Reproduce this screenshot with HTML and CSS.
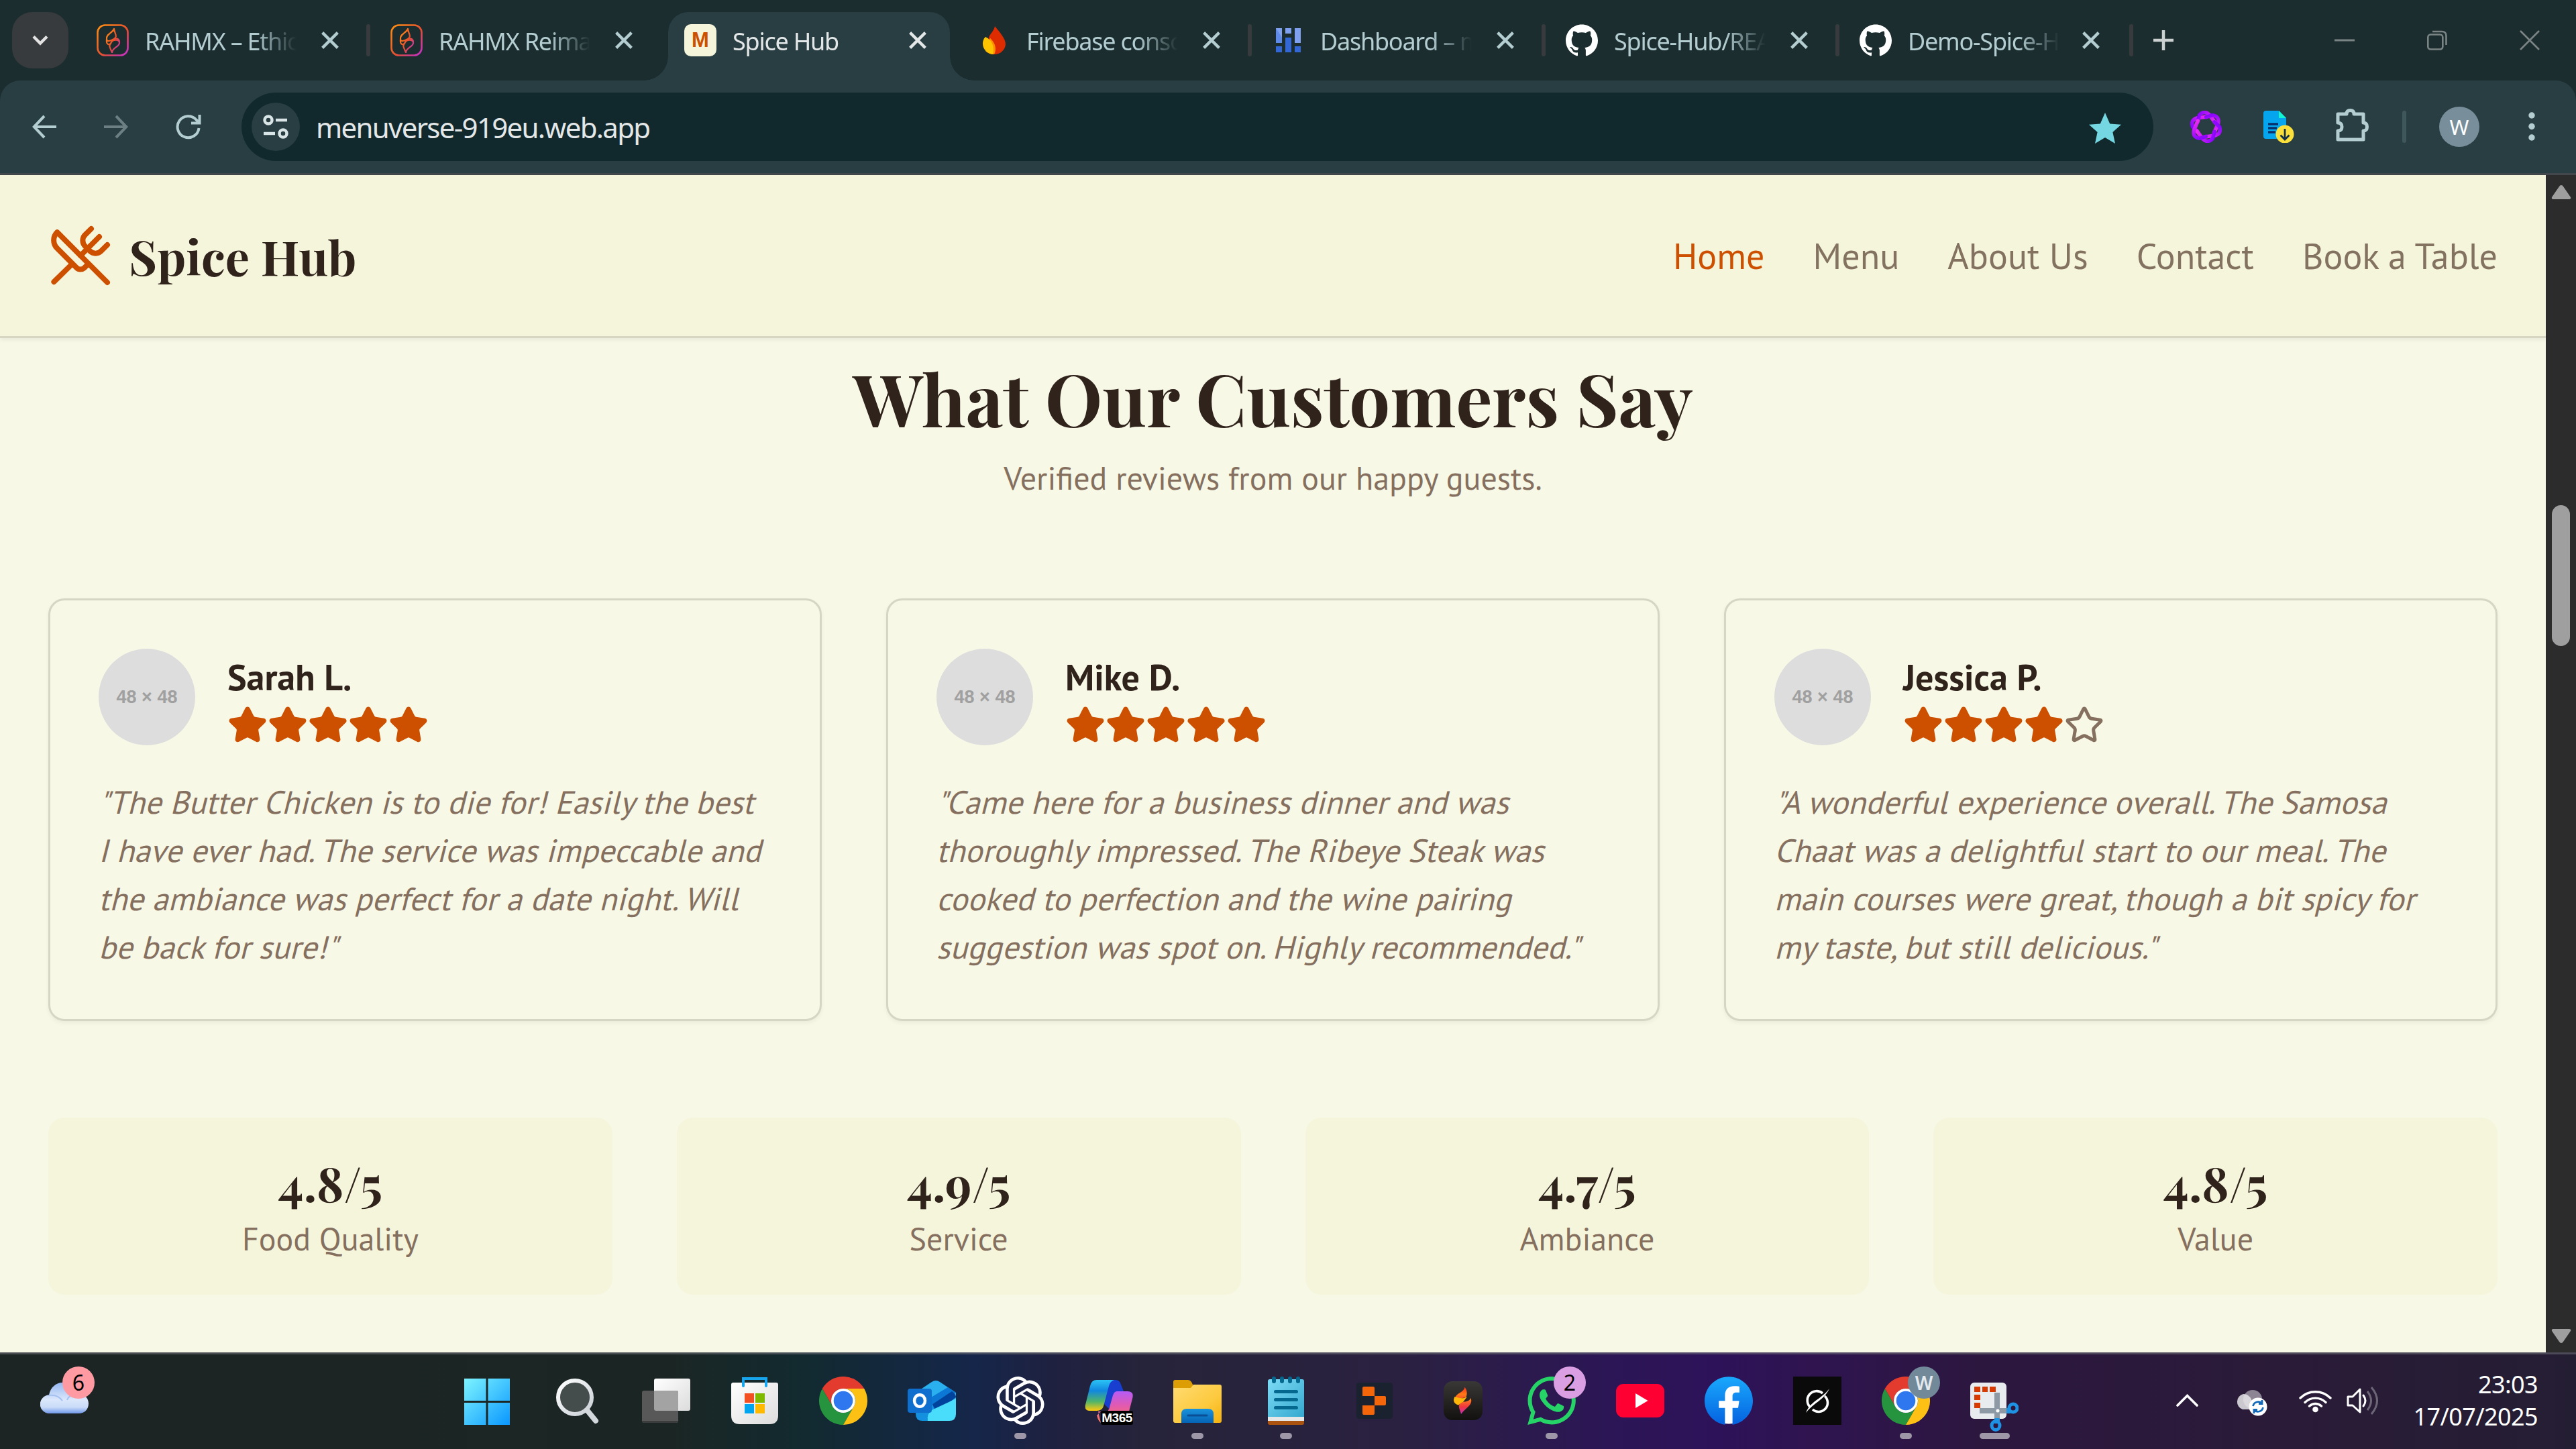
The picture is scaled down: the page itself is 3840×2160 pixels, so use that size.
FILE: index.html
```html
<!DOCTYPE html>
<html lang="en">
<head>
<meta charset="utf-8">
<title>Spice Hub</title>
<link rel="stylesheet" href="styles.css">
</head>
<body>
<svg class="defs" width="0" height="0" aria-hidden="true">
  <defs>
    <linearGradient id="rx" x1="0" y1="0" x2="1" y2="1"><stop offset="0" stop-color="#ff9112"/><stop offset=".55" stop-color="#e8502f"/><stop offset="1" stop-color="#c22fd0"/></linearGradient>
    <linearGradient id="win" x1="0" y1="0" x2="1" y2="1"><stop offset="0" stop-color="#7df4ff"/><stop offset="1" stop-color="#0a97ff"/></linearGradient>
    <linearGradient id="glass" x1="0" y1="0" x2="1" y2="1"><stop offset="0" stop-color="#ffffff"/><stop offset="1" stop-color="#c9cfd6"/></linearGradient>
    <linearGradient id="white" x1="0" y1="0" x2="1" y2="1"><stop offset="0" stop-color="#fff"/><stop offset="1" stop-color="#dcdcdc"/></linearGradient>
    <linearGradient id="fold" x1="0" y1="0" x2="1" y2="1"><stop offset="0" stop-color="#ffdb71"/><stop offset=".6" stop-color="#fdca3f"/><stop offset="1" stop-color="#f5b20e"/></linearGradient>
    <linearGradient id="foldb" x1="0" y1="0" x2="0" y2="1"><stop offset="0" stop-color="#1a93dc"/><stop offset="1" stop-color="#0563b5"/></linearGradient>
    <linearGradient id="note" x1="0" y1="0" x2="1" y2="1"><stop offset="0" stop-color="#7ddbf5"/><stop offset="1" stop-color="#35a8cf"/></linearGradient>
    <linearGradient id="fb" x1="0" y1="0" x2="0" y2="1"><stop offset="0" stop-color="#19a9fd"/><stop offset="1" stop-color="#0562e0"/></linearGradient>
    <linearGradient id="purple" x1="0" y1="1" x2="1" y2="0"><stop offset="0" stop-color="#7a00ff"/><stop offset="1" stop-color="#ec2bf2"/></linearGradient>
    <linearGradient id="cop1" x1="0" y1="0" x2="0" y2="1"><stop offset="0" stop-color="#2bc4f5"/><stop offset=".35" stop-color="#1187df"/><stop offset=".7" stop-color="#4fb56a"/><stop offset="1" stop-color="#ffc90f"/></linearGradient>
    <linearGradient id="cop2" x1="0" y1="0" x2="0" y2="1"><stop offset="0" stop-color="#b65cf7"/><stop offset=".45" stop-color="#e15ab0"/><stop offset="1" stop-color="#ff7a55"/></linearGradient>
    <linearGradient id="cloud" x1="0" y1="0" x2="0" y2="1"><stop offset="0" stop-color="#94b8f2"/><stop offset=".55" stop-color="#dbe7fb"/><stop offset=".8" stop-color="#c9dbf8"/><stop offset="1" stop-color="#6f98ea"/></linearGradient>
    <linearGradient id="flame" x1="0" y1="0" x2="0" y2="1"><stop offset="0" stop-color="#ff2d1a"/><stop offset=".6" stop-color="#ff7a18"/><stop offset="1" stop-color="#ff4a28"/></linearGradient>
    <linearGradient id="flame2" x1="0" y1="0" x2="0" y2="1"><stop offset="0" stop-color="#ff8a18"/><stop offset=".55" stop-color="#f0353f"/><stop offset="1" stop-color="#c42fc0"/></linearGradient>
    <linearGradient id="dark" x1="0" y1="0" x2="0" y2="1"><stop offset="0" stop-color="#3a3836"/><stop offset="1" stop-color="#121110"/></linearGradient>
    <symbol id="x" viewBox="0 0 24 24"><path d="M1.5 1.5 22.500 22.500M22.500 1.500 1.500 22.500" fill="none" stroke="currentColor" stroke-width="4"/></symbol>
    <symbol id="rahmx" viewBox="0 0 48 48"><rect x="1.500" y="1.500" width="45" height="45" rx="11" fill="none" stroke="url(#rx)" stroke-width="2.600"/><path d="M26 7C27 15 32 18 26 22C21 25 15 27 15 22C14 15 23 14 26 7ZM15 23C14 30 19 33 22 27C24 23 33 22 34 27C35 34 24 34 23 42C20 35 17 32 22 28M26 22C31 20 34 23 34 27" fill="none" stroke="url(#rx)" stroke-width="2.200" stroke-linejoin="round"/></symbol>
    <symbol id="github" viewBox="0 0 24 24"><path fill="#fff" d="M12 .297c-6.630 0-12 5.373-12 12 0 5.303 3.438 9.800 8.205 11.385.6.113.82-.258.82-.577 0-.285-.01-1.040-.015-2.040-3.338.724-4.042-1.610-4.042-1.610C4.422 18.070 3.633 17.700 3.633 17.700c-1.087-.744.084-.729.084-.729 1.205.084 1.838 1.236 1.838 1.236 1.070 1.835 2.809 1.305 3.495.998.108-.776.417-1.305.76-1.605-2.665-.3-5.466-1.332-5.466-5.930 0-1.310.465-2.380 1.235-3.220-.135-.303-.54-1.523.105-3.176 0 0 1.005-.322 3.300 1.230.96-.267 1.980-.399 3-.405 1.020.006 2.040.138 3 .405 2.280-1.552 3.285-1.230 3.285-1.230.645 1.653.24 2.873.12 3.176.765.84 1.230 1.910 1.230 3.220 0 4.610-2.805 5.625-5.475 5.920.42.36.81 1.096.81 2.220 0 1.606-.015 2.896-.015 3.286 0 .315.21.69.825.57C20.565 22.092 24 17.592 24 12.297c0-6.627-5.373-12-12-12"/></symbol>
    <symbol id="knot" viewBox="0 0 24 24"><path fill="currentColor" d="M22.2819 9.8211a5.9847 5.9847 0 0 0-.5157-4.9108 6.0462 6.0462 0 0 0-6.5098-2.9A6.0651 6.0651 0 0 0 4.9807 4.1818a5.9847 5.9847 0 0 0-3.9977 2.9 6.0462 6.0462 0 0 0 .7427 7.0966 5.98 5.98 0 0 0 .511 4.9107 6.051 6.051 0 0 0 6.5146 2.9001A5.9847 5.9847 0 0 0 13.2599 24a6.0557 6.0557 0 0 0 5.7718-4.2058 5.9894 5.9894 0 0 0 3.9977-2.9001 6.0557 6.0557 0 0 0-.7475-7.0729zm-9.022 12.6081a4.4755 4.4755 0 0 1-2.8764-1.0408l.1419-.0804 4.7783-2.7582a.7948.7948 0 0 0 .3927-.6813v-6.7369l2.02 1.1686a.071.071 0 0 1 .038.052v5.5826a4.504 4.504 0 0 1-4.4945 4.4944zm-9.6607-4.1254a4.4708 4.4708 0 0 1-.5346-3.0137l.142.0852 4.783 2.7582a.7712.7712 0 0 0 .7806 0l5.8428-3.3685v2.3324a.0804.0804 0 0 1-.0332.0615L9.74 19.9502a4.4992 4.4992 0 0 1-6.1408-1.6464zM2.3408 7.8956a4.485 4.485 0 0 1 2.3655-1.9728V11.6a.7664.7664 0 0 0 .3879.6765l5.8144 3.3543-2.0201 1.1685a.0757.0757 0 0 1-.071 0l-4.8303-2.7865A4.504 4.504 0 0 1 2.3408 7.872zm16.5963 3.8558L13.1038 8.364 15.1192 7.2a.0757.0757 0 0 1 .071 0l4.8303 2.7913a4.4944 4.4944 0 0 1-.6765 8.1042v-5.6772a.79.79 0 0 0-.407-.667zm2.0107-3.0231l-.142-.0852-4.7735-2.7818a.7759.7759 0 0 0-.7854 0L9.409 9.2297V6.8974a.0662.0662 0 0 1 .0284-.0615l4.8303-2.7866a4.4992 4.4992 0 0 1 6.6802 4.66zM8.3065 12.863l-2.02-1.1638a.0804.0804 0 0 1-.038-.0567V6.0742a4.4992 4.4992 0 0 1 7.3757-3.4537l-.142.0805L8.704 5.459a.7948.7948 0 0 0-.3927.6813zm1.0976-2.3654l2.602-1.4998 2.6069 1.4998v2.9994l-2.5974 1.4997-2.6067-1.4997Z"/></symbol>
    <symbol id="chrome" viewBox="0 0 72 72"><path fill="#e33b2e" d="M36 18H67.200A36 36 0 0 0 4.800 18L20.400 45A18 18 0 0 1 36 18Z"/><path fill="#26943f" d="M20.400 45 4.800 18A36 36 0 0 0 36 72L51.600 45A18 18 0 0 1 20.400 45Z"/><path fill="#fdc015" d="M51.600 45 36 72A36 36 0 0 0 67.200 18H36A18 18 0 0 1 51.600 45Z"/><circle cx="36" cy="36" r="18" fill="#fff"/><circle cx="36" cy="36" r="14.300" fill="#2f77ee"/></symbol>
    <symbol id="star" viewBox="0 0 24 24"><path stroke="currentColor" stroke-width="2" stroke-linecap="round" stroke-linejoin="round" d="M11.525 2.295a.53.53 0 0 1 .95 0l2.31 4.679a2.123 2.123 0 0 0 1.595 1.16l5.166.756a.53.53 0 0 1 .294.904l-3.736 3.638a2.123 2.123 0 0 0-.611 1.878l.882 5.14a.53.53 0 0 1-.771.56l-4.618-2.428a2.122 2.122 0 0 0-1.973 0L6.396 21.01a.53.53 0 0 1-.77-.56l.881-5.139a2.122 2.122 0 0 0-.611-1.879L2.16 9.795a.53.53 0 0 1 .294-.906l5.165-.755a2.122 2.122 0 0 0 1.597-1.16z"/></symbol>
  </defs>
</svg>

<div class="browser">
  <div class="tabstrip">
    <div class="tab-search"><svg width="28" height="18" viewBox="0 0 28 18"><path d="M4 3.500 14 13.500 24 3.500" fill="none" stroke="#e3e3e3" stroke-width="4.500"/></svg></div>
    <div class="tab sep"><svg class="fav"><use href="#rahmx"/></svg><span class="title">RAHMX – Ethical</span><svg class="close"><use href="#x"/></svg></div>
    <div class="tab"><svg class="fav"><use href="#rahmx"/></svg><span class="title">RAHMX Reimagined</span><svg class="close"><use href="#x"/></svg></div>
    <div class="tab active"><span class="fav letter">M</span><span class="title">Spice Hub</span><svg class="close"><use href="#x"/></svg></div>
    <div class="tab sep"><svg class="fav" viewBox="0 0 48 48"><path fill="#dd2c00" d="M25 3C33 13 41 22 41 30A17 16 0 0 1 24 45A17 16 0 0 1 14 36C14 28 14 28 16 20C18 14 24 10 25 3Z"/><path fill="#ff9100" d="M18 21C26 28 28 38 24 45A17 16 0 0 1 11 40Z"/><path fill="#ffc400" d="M11 19C20 23 25 33 22 44.800C13 44 7 37 7 29C7 25 8 22 11 19Z"/></svg><span class="title">Firebase console</span><svg class="close"><use href="#x"/></svg></div>
    <div class="tab sep"><svg class="fav" viewBox="0 0 48 48"><g fill="#7fa0ee"><path d="M6 6h9v22H6zM20 6h9v8h-9zM34 6h9v22h-9z"/></g><g fill="#3367d6"><path d="M6 33h9v9H6zM20 20h9v22h-9zM34 33h9v9h-9z"/></g><path fill="#5e8bea" d="M6 6v22h9V20z"/></svg><span class="title">Dashboard – menuverse</span><svg class="close"><use href="#x"/></svg></div>
    <div class="tab sep"><svg class="fav"><use href="#github"/></svg><span class="title">Spice-Hub/README</span><svg class="close"><use href="#x"/></svg></div>
    <div class="tab sep"><svg class="fav"><use href="#github"/></svg><span class="title">Demo-Spice-Hub</span><svg class="close last"><use href="#x"/></svg></div>
    <svg class="plus" width="30" height="30"><path d="M15 0V30M0 15H30" stroke="#ccd2d2" stroke-width="4.500"/></svg>
    <div class="wincontrols">
      <svg width="30" height="30"><path d="M0 15H30" stroke="#7b8485" stroke-width="3"/></svg>
      <svg width="30" height="30" fill="none" stroke="#7b8485" stroke-width="2.600"><rect x="1.300" y="6.500" width="22" height="22" rx="4"/><path d="M8 2H22Q28.500 2 28.500 8.500V22"/></svg>
      <svg width="30" height="30"><path d="M1 1 29 29M29 1 1 29" stroke="#7b8485" stroke-width="2.600"/></svg>
    </div>
  </div>
  <div class="toolbar">
    <div class="navbtns">
      <svg width="36" height="36" fill="none" stroke="#b3cdd1" stroke-width="4"><path d="M18 2 2.800 18 18 34M3 18H36"/></svg>
      <svg width="36" height="36" fill="none" stroke="#6c7f83" stroke-width="4"><path d="M18 2 33.200 18 18 34M33 18H0"/></svg>
      <svg width="38" height="38" fill="none" stroke="#b3cdd1" stroke-width="4"><path d="M34.500 21A16 16 0 1 1 30.500 8.500L34 12M35.500 1V13.500H23"/></svg>
    </div>
    <div class="omnibox">
      <div class="site"><svg width="38" height="36" fill="none" stroke="#d8e4e5" stroke-width="4.500"><circle cx="8" cy="8" r="5.500"/><path d="M19 8H36M1 28H18"/><circle cx="30" cy="28" r="5.500"/></svg></div>
      <span class="url">menuverse-919eu.web.app</span>
      <svg class="bookmark" width="48" height="46" viewBox="0 0 48 46"><path fill="#75d7e2" d="M24 0 31.200 16.500 48 17.800 35.400 29 39 46 24 37 9 46 12.600 29 0 17.800 16.800 16.500Z"/></svg>
    </div>
    <div class="exts">
      <svg class="e1" width="49" height="48" viewBox="0 0 49 48" fill="none" stroke="url(#purple)" stroke-width="5.600" stroke-linecap="round" stroke-linejoin="round"><path id="petal" d="M12 31 4.500 24Q1 14 11 11L26 9"/><use href="#petal" transform="rotate(60 24.500 24)"/><use href="#petal" transform="rotate(120 24.500 24)"/><use href="#petal" transform="rotate(180 24.500 24)"/><use href="#petal" transform="rotate(240 24.500 24)"/><use href="#petal" transform="rotate(300 24.500 24)"/></svg>
      <svg class="e2" width="46" height="48"><path fill="#06a5ef" d="M4 0H23L34 11V38Q34 42 30 42H4Q0 42 0 38V4Q0 0 4 0Z"/><path fill="#12f5d0" d="M23 0 34 11H23Z"/><path d="M7 20H22M7 26H20M7 32H18" stroke="#07306b" stroke-width="3.500"/><circle cx="32" cy="35" r="13.500" fill="#fbdf3a"/><path d="M32 27V42M25.500 36.500 32 43 38.500 36.500" fill="none" stroke="#15324c" stroke-width="2.800"/></svg>
      <svg class="e3" width="50" height="50" fill="none" stroke="#b3cdd1" stroke-width="5" stroke-linejoin="round"><path d="M3 8H16Q16 2.500 21.500 2.500T27 8H41V21Q46.500 21 46.500 27T41 33V46H3V33Q9 33 9 27T3 21Z"/></svg>
      <span class="vbar"></span>
      <span class="profile">W</span>
      <svg class="dots" width="10" height="44" fill="#b3cdd1"><circle cx="5" cy="5" r="4.700"/><circle cx="5" cy="21.500" r="4.700"/><circle cx="5" cy="38" r="4.700"/></svg>
    </div>
  </div>
</div>

<div class="viewport">
  <div class="page">
    <header class="header">
      <div class="logo">
        <svg width="96" height="96" viewBox="0 0 24 24" fill="none" stroke="#cc5000" stroke-width="2" stroke-linecap="round" stroke-linejoin="round"><path d="m16 2-2.300 2.300a3 3 0 0 0 0 4.200l1.800 1.800a3 3 0 0 0 4.200 0L22 8"/><path d="M15 15 3.300 3.300a4.200 4.200 0 0 0 0 6l7.300 7.300c.7.7 2 .7 2.800 0L15 15Zm0 0 7 7"/><path d="m2.100 21.800 6.400-6.300"/><path d="m19 5-7 7"/></svg>
        <span>Spice Hub</span>
      </div>
      <nav class="nav"><a class="current">Home</a><a>Menu</a><a>About Us</a><a>Contact</a><a>Book a Table</a></nav>
    </header>
    <main class="main">
      <h2>What Our Customers Say</h2>
      <p class="sub">Verified reviews from our happy guests.</p>
      <div class="reviews">
        <article class="card">
          <div class="who"><div class="avatar">48 × 48</div><div><h3>Sarah L.</h3><div class="stars"><svg><use href="#star"/></svg><svg><use href="#star"/></svg><svg><use href="#star"/></svg><svg><use href="#star"/></svg><svg><use href="#star"/></svg></div></div></div>
          <p><span>"The Butter Chicken is to die for! Easily the best</span><span>I have ever had. The service was impeccable and</span><span>the ambiance was perfect for a date night. Will</span><span>be back for sure!"</span></p>
        </article>
        <article class="card">
          <div class="who"><div class="avatar">48 × 48</div><div><h3>Mike D.</h3><div class="stars"><svg><use href="#star"/></svg><svg><use href="#star"/></svg><svg><use href="#star"/></svg><svg><use href="#star"/></svg><svg><use href="#star"/></svg></div></div></div>
          <p><span>"Came here for a business dinner and was</span><span>thoroughly impressed. The Ribeye Steak was</span><span>cooked to perfection and the wine pairing</span><span>suggestion was spot on. Highly recommended."</span></p>
        </article>
        <article class="card">
          <div class="who"><div class="avatar">48 × 48</div><div><h3>Jessica P.</h3><div class="stars"><svg><use href="#star"/></svg><svg><use href="#star"/></svg><svg><use href="#star"/></svg><svg><use href="#star"/></svg><svg class="empty"><use href="#star"/></svg></div></div></div>
          <p><span>"A wonderful experience overall. The Samosa</span><span>Chaat was a delightful start to our meal. The</span><span>main courses were great, though a bit spicy for</span><span>my taste, but still delicious."</span></p>
        </article>
      </div>
      <div class="stats">
        <div class="stat"><b>4.8/5</b><span>Food Quality</span></div>
        <div class="stat"><b>4.9/5</b><span>Service</span></div>
        <div class="stat"><b>4.7/5</b><span>Ambiance</span></div>
        <div class="stat"><b>4.8/5</b><span>Value</span></div>
      </div>
    </main>
  </div>
  <div class="scrollbar">
    <svg width="30" height="21"><path d="M15 0 Q17 0 18 2L29 18Q30 21 27 21H3Q0 21 1 18L12 2Q13 0 15 0Z" fill="#9f9f9f"/></svg>
    <span class="thumb"></span>
    <svg class="down" width="30" height="21"><path d="M15 21Q17 21 18 19L29 3Q30 0 27 0H3Q0 0 1 3L12 19Q13 21 15 21Z" fill="#9f9f9f"/></svg>
  </div>
</div>

<div class="taskbar">
  <div class="weather">
    <svg width="72" height="46"><path fill="url(#cloud)" d="M14 46A13.500 13.500 0 0 1 13 18.500C15 7 24 0 33 0C43 0 50 6 53 17C64 15 72 22 72 31C72 40 66 46 57 46Z"/><path d="M12.500 19Q26 17 33 27M40 26Q43 18 53 17" fill="none" stroke="#a4c0f1" stroke-width="2"/></svg>
    <span class="badge pink">6</span>
  </div>
  <div class="apps">
    <div class="app start"><svg viewBox="0 0 72 72"><path fill="url(#win)" d="M2 3H34.500V36H2ZM37.500 3H70V36H37.500ZM2 39H34.500V72H2ZM37.500 39H70V72H37.500Z"/></svg></div>
    <div class="app"><svg viewBox="0 0 72 72"><circle cx="32" cy="31" r="25" fill="#454c4c" stroke="url(#glass)" stroke-width="6"/><path d="M50 50 63 66" stroke="#d3d8dd" stroke-width="8" stroke-linecap="round"/></svg></div>
    <div class="app"><svg viewBox="0 0 72 72"><rect x="18" y="3" width="54" height="48" rx="3" fill="url(#white)"/><rect x="0" y="21" width="54" height="48" rx="3" fill="#585858"/><path d="M18 21H51Q54 21 54 24V51H21Q18 51 18 48Z" fill="#a3a3a3"/><path d="M0 66H54Q54 69 51 69H3Q0 69 0 66Z" fill="#3c3c3c"/></svg></div>
    <div class="app"><svg viewBox="0 0 72 72"><path d="M19 17V3H53V17" fill="none" stroke="#19b0f0" stroke-width="4"/><path fill="url(#white)" d="M4 9H68Q71 9 71 12V58Q71 71 58 71H14Q1 71 1 58V12Q1 9 4 9Z"/><path d="M19 14V3H53V14" fill="none" stroke="#19a4ee" stroke-width="4" stroke-linecap="round"/><path fill="#f25022" d="M21 25H35V39H21Z"/><path fill="#7fba00" d="M37 25H51V39H37Z"/><path fill="#00a4ef" d="M21 41H35V55H21Z"/><path fill="#ffb900" d="M37 41H51V55H37Z"/></svg></div>
    <div class="app"><svg><use href="#chrome"/></svg></div>
    <div class="app"><svg viewBox="0 0 72 72"><path fill="#2ab0ee" d="M12 24 36 8Q42 4 48 8L72 24V40H12Z"/><path fill="#0a78d4" d="M30 34 60 16 72 24 36 48Z"/><path fill="#00439c" d="M36 42 66 22Q72 26 72 31L42 54Z"/><path fill="#1490df" d="M12 40H36L50 66H22Q12 66 12 56Z"/><path fill="#49dcfb" d="M72 33V56Q72 66 62 66H30Q28 56 36 50Z"/><rect y="18" width="36" height="36" rx="4" fill="#0f6fcf"/><ellipse cx="18" cy="36" rx="8" ry="8.800" fill="none" stroke="#fff" stroke-width="4.500"/></svg></div>
    <div class="app run"><svg class="white"><use href="#knot"/></svg></div>
    <div class="app"><svg viewBox="0 0 72 72"><path fill="#183fd0" d="M34 5H46Q52 5 54 12L58 22Q48 20 44 30L36 48 28 40Z"/><path fill="url(#cop1)" d="M18 5H44Q38 7 36 14L28 44Q26 51 18 51H8Q-1 51 1 42L8 14Q10 5 18 5Z"/><path fill="url(#cop2)" d="M48 22H64Q74 22 71 33L66 52H24L18 58Q20 66 24 69L20 52H34Q37 48 38 42L42 28Q44 22 48 22Z"/><rect x="24" y="51" width="48" height="21" rx="3" fill="#000"/></svg><span class="m365">M365</span></div>
    <div class="app run"><svg viewBox="0 0 72 72"><path fill="#dd9d05" d="M3 5H22Q25 5 27 8L30 14V30H0V8Q0 5 3 5Z"/><path fill="url(#fold)" d="M0 17H26L30 12H69Q72 12 72 15V66Q72 69 69 69H3Q0 69 0 66Z"/><path fill="url(#foldb)" d="M12 69V56Q12 48 20 48H52Q60 48 60 56V69Z"/><path d="M22 58H50" stroke="#0a4f95" stroke-width="3" stroke-linecap="round"/></svg></div>
    <div class="app run"><svg viewBox="0 0 72 72"><rect x="9" y="56" width="54" height="16" rx="3" fill="#aa5310"/><path fill="#e7e7e7" d="M9 52H63V66H9Z"/><path fill="url(#note)" d="M12 4H60Q63 4 63 7V60H9V7Q9 4 12 4Z"/><path d="M18 3V7M30 3V7M42 3V7M54 3V7" stroke="#05688f" stroke-width="6" stroke-linecap="round"/><path d="M20.500 22.500H51.500M20.500 34.500H51.500M20.500 46.500H51.500" stroke="#05688f" stroke-width="5" stroke-linecap="round"/></svg></div>
    <div class="app"><svg viewBox="0 0 72 72"><rect x="9" y="9" width="54" height="54" rx="4" fill="#1a222f"/><path fill="#f5660a" d="M20 15H34Q36 15 36 17V29H18V17Q18 15 20 15ZM36 29H51Q53 29 53 31V41Q53 43 51 43H36ZM18 43H36V55Q36 57 34 57H20Q18 57 18 55Z"/></svg></div>
    <div class="app"><svg viewBox="0 0 72 72"><rect x="7" y="7" width="58" height="58" rx="13" fill="url(#dark)"/><path fill="url(#flame)" d="M38.500 15.500C43 22 42 28 40 31L25 34C22 25 37 25 38.500 15.500Z"/><path fill="#ffb60a" d="M23.500 30C20 36 23 41 29 42.500L36 38 42 30C36 34 30 32 23.500 30Z"/><path fill="url(#flame2)" d="M47.500 32C51 43 41 45 33 56C32 50 27 44 32 40C37 36 44 39 47.500 32Z"/></svg></div>
    <div class="app run"><svg viewBox="0 0 24 24"><path fill="#25d366" d="M17.472 14.382c-.297-.149-1.758-.867-2.03-.967-.273-.099-.471-.148-.67.15-.197.297-.767.966-.94 1.164-.173.199-.347.223-.644.075-.297-.15-1.255-.463-2.39-1.475-.883-.788-1.48-1.761-1.653-2.059-.173-.297-.018-.458.13-.606.134-.133.298-.347.446-.52.149-.174.198-.298.298-.497.099-.198.05-.371-.025-.52-.075-.149-.669-1.612-.916-2.207-.242-.579-.487-.5-.669-.51-.173-.008-.371-.01-.57-.01-.198 0-.52.074-.792.372-.272.297-1.04 1.016-1.04 2.479 0 1.462 1.065 2.875 1.213 3.074.149.198 2.096 3.2 5.077 4.487.709.306 1.262.489 1.694.625.712.227 1.36.195 1.871.118.571-.085 1.758-.719 2.006-1.413.248-.694.248-1.289.173-1.413-.074-.124-.272-.198-.57-.347m-5.421 7.403h-.004a9.87 9.87 0 01-5.031-1.378l-.361-.214-3.741.982.998-3.648-.235-.374a9.86 9.86 0 01-1.51-5.26c.001-5.45 4.436-9.884 9.888-9.884 2.64 0 5.122 1.03 6.988 2.898a9.825 9.825 0 012.893 6.994c-.003 5.45-4.437 9.884-9.885 9.884m8.413-18.297A11.815 11.815 0 0012.05 0C5.495 0 .16 5.335.157 11.892c0 2.096.547 4.142 1.588 5.945L.057 24l6.305-1.654a11.882 11.882 0 005.683 1.448h.005c6.554 0 11.89-5.335 11.893-11.893a11.821 11.821 0 00-3.48-8.413z"/></svg><span class="badge lilac">2</span></div>
    <div class="app"><svg viewBox="0 0 72 72"><rect y="11" width="72" height="50" rx="11" fill="#ff0033"/><path fill="#fff" d="M29 25 47.500 36 29 47Z"/></svg></div>
    <div class="app"><svg viewBox="0 0 24 24"><circle cx="12" cy="12.500" r="11" fill="#fff"/><path fill="url(#fb)" d="M24 12.073c0-6.627-5.373-12-12-12s-12 5.373-12 12c0 5.990 4.388 10.954 10.125 11.854v-8.385H7.078v-3.470h3.047V9.430c0-3.007 1.792-4.669 4.533-4.669 1.312 0 2.686.235 2.686.235v2.953H15.830c-1.491 0-1.956.925-1.956 1.874v2.250h3.328l-.532 3.470h-2.796v8.385C19.612 23.027 24 18.062 24 12.073z"/></svg></div>
    <div class="app"><svg viewBox="0 0 72 72"><path fill="#0a0a0a" d="M0 0H72V72H0Z"/><path d="M44 25A13 13 0 0 0 26 46M29 49A13 13 0 0 0 47 29" fill="none" stroke="#fff" stroke-width="3.600"/><path fill="#fff" d="M54 18C46 35 32 38 19 54C26 36 42 34 54 18Z"/></svg></div>
    <div class="app run"><svg><use href="#chrome"/></svg><span class="badge slate">W</span></div>
    <div class="app run wide"><svg class="snip" viewBox="0 0 72 82"><rect y="9" width="54" height="54" rx="6" fill="#e9ecef"/><path fill="#d83b01" d="M6 15H15V23H6ZM18 15H26V23H18ZM29 15H38V23H29ZM6 27H15V35H6ZM6 39H15V47H6Z"/><path d="M40 24V66M14 51H58" stroke="#8d9aa5" stroke-width="8"/><path d="M40 62V70M54 51H60" stroke="#1e93e4" stroke-width="8"/><circle cx="41" cy="51" r="2.500" fill="#fff"/><ellipse cx="38" cy="73" rx="6" ry="6.500" fill="none" stroke="#1e93e4" stroke-width="5"/><ellipse cx="64" cy="47" rx="6" ry="6" fill="none" stroke="#1e93e4" stroke-width="5"/></svg></div>
  </div>
  <div class="tray">
    <svg class="chev" width="33" height="20"><path d="M2 18 16.500 3.500 31 18" fill="none" stroke="#fff" stroke-width="3.600" stroke-linecap="round"/></svg>
    <svg class="sync" width="50" height="42"><circle cx="27" cy="16" r="14" fill="#8d8594"/><path fill="#e8e6ea" d="M13 8A13 13 0 0 1 26 20V31H12A12 12 0 0 1 13 8Z" opacity=".85"/><circle cx="35" cy="27" r="13.500" fill="#fff"/><path d="M27.500 26A8 8 0 0 1 41 22M42.500 28A8 8 0 0 1 29 32M41 17V22.500H36M29 37V31.500H34" fill="none" stroke="#1268b8" stroke-width="2.800"/></svg>
    <svg class="wifi" width="49" height="36" fill="none" stroke="#fff" stroke-width="3.400" stroke-linecap="round"><path d="M2 14A32 32 0 0 1 47 14M9 20.500A22 22 0 0 1 40 20.500M15.500 26A13.500 13.500 0 0 1 33.500 26"/><circle cx="24.500" cy="31" r="2.600" fill="#fff"/></svg>
    <svg class="vol" width="50" height="42" fill="none" stroke="#fff" stroke-width="3"><path d="M2 15H9L20 4V38L9 28H2Z" stroke-linejoin="round"/><path d="M25 13Q31 21 25 29" stroke-linecap="round"/><path d="M31 7Q42 21 31 35M37 1Q54 21 37 41" stroke="#6d6676"/></svg>
    <div class="clock"><span>23:03</span><span>17/07/2025</span></div>
  </div>
</div>
</body>
</html>
```
FILE: styles.css
```css
* { box-sizing: border-box; }
body {
  margin: 0;
  width: 3840px;
  height: 2160px;
  overflow: hidden;
  display: flex;
  flex-direction: column;
  background: #f7f8e6;
  font-family: "PT Sans", "Lato", sans-serif;
  color: #30231c;
}
svg { display: block; flex: none; }
.defs { position: absolute; }
h2, h3, p { margin: 0; }

/* Browser chrome */
.browser {
  flex: none;
  height: 261px;
  background: #1c2d2f;
  border-bottom: 3px solid #42474c;
  font-family: "Noto Sans", "Open Sans", sans-serif;
}
.tabstrip {
  height: 120px;
  display: flex;
  align-items: center;
  padding-left: 18px;
}
.tab-search {
  width: 84px;
  height: 84px;
  margin-right: 18px;
  border-radius: 30px;
  background: #373b3d;
  display: flex;
  align-items: center;
  justify-content: center;
}
.tab {
  position: relative;
  width: 438px;
  height: 102px;
  margin-top: 18px;
  padding: 0 0 18px 24px;
  display: flex;
  align-items: center;
  color: #b3cdd1;
}
.tab.sep::after {
  content: "";
  position: absolute;
  left: 426px;
  top: 18px;
  width: 6px;
  height: 48px;
  border-radius: 3px;
  background: #373b3d;
}
.tab.active {
  width: 420px;
  margin-right: 18px;
  background: #283e42;
  border-radius: 30px 30px 0 0;
  color: #e3e7e7;
}
.tab.active::before, .tab.active::after {
  content: "";
  position: absolute;
  bottom: 0;
  width: 36px;
  height: 36px;
}
.tab.active::before { left: -36px; background: radial-gradient(circle at 0 0, transparent 35.5px, #283e42 36px); }
.tab.active::after { right: -36px; background: radial-gradient(circle at 100% 0, transparent 35.5px, #283e42 36px); }
.fav { width: 48px; height: 48px; flex: none; }
.fav.letter {
  border-radius: 10px;
  background: #f5f5dc;
  color: #cc5000;
  font: 700 31px/48px "Liberation Sans", sans-serif;
  text-align: center;
}
.title {
  width: 229px;
  margin: 3px 0 0 24px;
  font-size: 36px;
  line-height: 50px;
  letter-spacing: -1.25px;
  white-space: nowrap;
  overflow: hidden;
  -webkit-mask-image: linear-gradient(90deg, #000 165px, transparent 226px);
  mask-image: linear-gradient(90deg, #000 165px, transparent 226px);
}
.close { width: 26px; height: 26px; margin-left: 34px; }
.close.last { margin-left: 31px; }
.plus { margin-left: 24px; }
.wincontrols { display: flex; gap: 108px; margin-left: 240px; }

.toolbar {
  height: 138px;
  background: #283e42;
  border-radius: 30px 30px 0 0;
  display: flex;
  align-items: center;
  padding-left: 48px;
}
.navbtns { width: 312px; display: flex; align-items: center; gap: 71px; }
.omnibox {
  width: 2850px;
  height: 102px;
  border-radius: 51px;
  background: #11292d;
  display: flex;
  align-items: center;
  padding: 0 48px 0 15px;
}
.site {
  width: 72px;
  height: 72px;
  border-radius: 50%;
  background: #283e42;
  display: flex;
  align-items: center;
  justify-content: center;
}
.url {
  flex: 1;
  margin-left: 24px;
  font-size: 42px;
  letter-spacing: -1.7px;
  color: #e3e7e7;
}
.bookmark { margin-top: 4px; }
.exts { display: flex; align-items: center; color: #fff; }
.e1 { margin-left: 54px; }
.e2 { margin-left: 61px; }
.e3 { margin: -4px 0 0 62px; }
.vbar { width: 6px; height: 48px; margin-left: 49px; border-radius: 3px; background: #3f575b; }
.profile {
  width: 60px;
  height: 60px;
  margin-left: 49px;
  border-radius: 50%;
  background: #788f9b;
  font: 31px/60px "Noto Sans", sans-serif;
  text-align: center;
}
.dots { margin-left: 73px; }

/* Page */
.viewport { flex: none; height: 1755px; display: flex; }
.page { width: 3795px; background: #f7f8e6; }
.header {
  height: 243px;
  padding: 0 72px;
  display: flex;
  align-items: center;
  justify-content: space-between;
  background: #f5f5dc;
  border-bottom: 3px solid #d6d6c2;
  box-shadow: 0 3px 6px rgba(0, 0, 0, .06);
}
.logo {
  display: flex;
  align-items: center;
  gap: 24px;
  font: 700 72px/96px "Playfair Display", "Liberation Serif", serif;
}
.nav { display: flex; gap: 72px; font-size: 54px; line-height: 84px; color: #837260; }
.nav .current { color: #cc5000; }
.main { padding: 28px 72px 0; }
.main h2 {
  text-align: center;
  font: 700 108px/120px "Playfair Display", "Liberation Serif", serif;
}
.sub {
  margin-top: 24px;
  text-align: center;
  font-size: 48px;
  line-height: 72px;
  color: #856f5e;
}
.reviews {
  margin-top: 144px;
  display: grid;
  grid-template-columns: repeat(3, 1fr);
  gap: 96px;
}
.card {
  height: 630px;
  padding: 72px;
  border: 3px solid #d6d6c4;
  border-radius: 24px;
  background: #f8f8e7;
  box-shadow: 0 3px 6px rgba(0, 0, 0, .05);
}
.who { display: flex; gap: 48px; }
.avatar {
  width: 144px;
  height: 144px;
  border-radius: 50%;
  background: #ddd;
  color: #a0a0a0;
  font: 700 27px/144px "Liberation Sans", sans-serif;
  text-align: center;
  white-space: nowrap;
}
.card h3 { font-size: 54px; line-height: 84px; font-weight: 700; }
.stars { display: flex; color: #cc5000; }
.stars svg { width: 60px; height: 60px; fill: currentColor; }
.stars .empty { color: #856f5e; fill: none; }
.card p {
  margin-top: 48px;
  font-size: 48px;
  line-height: 72px;
  white-space: nowrap;
  color: #856f5e;
}
/* slanted upright face, pivoting on each line's baseline */
.card p span {
  display: block;
  transform: skewX(-14deg);
  transform-origin: 0 54px;
}
.stats {
  margin-top: 144px;
  display: grid;
  grid-template-columns: repeat(4, 1fr);
  gap: 96px;
}
.stat {
  height: 264px;
  padding: 48px;
  border-radius: 24px;
  background: #f5f5dc;
  display: flex;
  flex-direction: column;
  align-items: center;
}
.stat b { font: 700 72px/96px "Playfair Display", "Liberation Serif", serif; }
.stat span { font-size: 48px; line-height: 72px; color: #856f5e; }

.scrollbar {
  width: 45px;
  background: #2c2c2c;
  display: flex;
  flex-direction: column;
  align-items: center;
  padding: 15px 0 14px;
}
.thumb { width: 27px; height: 210px; margin-top: 456px; border-radius: 14px; background: #9f9f9f; }
.down { margin-top: auto; }

/* Taskbar */
.taskbar {
  flex: none;
  height: 144px;
  border-top: 3px solid rgba(110, 112, 118, .55);
  background: linear-gradient(90deg, #1d2424 0, #1b2624 1000px, #122a30 1200px, #15264a 1450px, #1f2140 1570px, #26243a 1720px, #2a2140 2080px, #2c1656 2400px, #2d1259 2560px, #2f1450 2700px, #2c173f 2950px, #2a1b38 3400px, #241e33 3840px) border-box;
  display: flex;
  font-family: "Noto Sans", "Open Sans", sans-serif;
  color: #fff;
}
.weather { position: relative; width: 630px; padding: 42px 0 0 60px; }
.badge {
  position: absolute;
  width: 48px;
  height: 48px;
  border-radius: 50%;
  font-size: 32px;
  line-height: 48px;
  text-align: center;
  color: #000;
}
.badge.pink { left: 93px; top: 18px; background: #ff9aa2; }
.badge.lilac { left: 39px; top: -15px; background: #da9fe2; }
.badge.slate { left: 39px; top: -15px; background: #72899a; color: #e4eaee; font-size: 28px; font-weight: 600; }
.apps { display: flex; gap: 60px; margin-left: 60px; padding-top: 33px; }
.app { position: relative; width: 72px; height: 72px; }
.app.start { margin-right: 3px; }
.app svg { width: 72px; height: 72px; }
.app svg.white { color: #fff; }
.app svg.snip { height: 82px; }
.app.run::after {
  content: "";
  position: absolute;
  left: 27px;
  top: 84px;
  width: 18px;
  height: 9px;
  border-radius: 5px;
  background: #9d97a8;
}
.app.wide::after { left: 14px; width: 45px; }
.m365 {
  position: absolute;
  left: 24px;
  top: 51px;
  width: 48px;
  font: 700 19px/21px "Liberation Sans", sans-serif;
  text-align: center;
  letter-spacing: -.5px;
}
.tray { flex: 1; display: flex; }
.chev { margin: 58px 0 0 235px; }
.sync { margin: 51px 0 0 54px; }
.wifi { margin: 51px 0 0 46px; }
.vol { margin: 48px 0 0 22px; }
.clock {
  flex: 1;
  padding: 21px 57px 0 0;
  display: flex;
  flex-direction: column;
  align-items: flex-end;
  font-size: 36px;
  line-height: 48px;
  letter-spacing: -.6px;
}
```
